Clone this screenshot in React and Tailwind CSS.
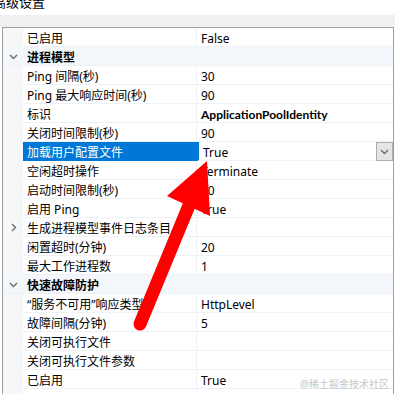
import React from "react";

const rows = [
  { name: "已启用", value: "False" },
  { cat: "进程模型" },
  { name: "Ping 间隔(秒)", value: "30" },
  { name: "Ping 最大响应时间(秒)", value: "90" },
  { name: "标识", value: "ApplicationPoolIdentity", bold: true },
  { name: "关闭时间限制(秒)", value: "90" },
  { name: "加载用户配置文件", value: "True", selected: true },
  { name: "空闲超时操作", value: "Terminate" },
  { name: "启动时间限制(秒)", value: "90" },
  { name: "启用 Ping", value: "True" },
  { name: "生成进程模型事件日志条目", value: "", expand: true },
  { name: "闲置超时(分钟)", value: "20" },
  { name: "最大工作进程数", value: "1" },
  { cat: "快速故障防护" },
  { name: "“服务不可用”响应类型", value: "HttpLevel" },
  { name: "故障间隔(分钟)", value: "5" },
  { name: "关闭可执行文件", value: "" },
  { name: "关闭可执行文件参数", value: "" },
  { name: "已启用", value: "True" },
  { name: "", value: "" },
];

const font = { fontFamily: '"Noto Sans", "Noto Sans CJK SC", sans-serif' };

function Chevron({ dir }) {
  return (
    <svg width="9" height="9" viewBox="0 0 9 9" fill="none" stroke="#6b6b6b" strokeWidth="1.4">
      {dir === "down" ? <path d="M1 3 L4.5 6.5 L8 3" /> : <path d="M3 1 L6.5 4.5 L3 8" />}
    </svg>
  );
}

function Row({ row }) {
  if (row.cat) {
    return (
      <div className="flex h-[19px] bg-[#f3f6fb] border-b border-[#eef1f5]">
        <div className="w-[20px] flex items-center justify-center">
          <Chevron dir="down" />
        </div>
        <div className="pl-[4px] pt-[4px] flex items-center font-bold text-[12px] text-black">{row.cat}</div>
      </div>
    );
  }
  return (
    <div className="flex h-[19px]">
      <div className="w-[20px] shrink-0 flex items-center justify-center bg-[#f6f7f9]">
        {row.expand && <Chevron dir="right" />}
      </div>
      <div
        className={`w-[174px] shrink-0 flex items-center pl-[4px] pt-[4px] text-[12px] whitespace-nowrap border-b border-r ${
          row.selected ? "bg-[#0078d7] text-white border-[#0078d7]" : "text-black border-[#eef1f5]"
        }`}
      >
        {row.name}
      </div>
      <div
        className={`flex-1 flex items-center justify-between pl-[4px] text-[12px] text-black border-b border-[#eef1f5] ${
          row.selected ? "border-l-2 border-l-[#0078d7] pl-[2px]" : ""
        }`}
      >
        <span
          className={`pt-[4px] ${row.bold ? "font-bold" : ""}`}
          style={row.bold ? { fontFamily: "Lato, sans-serif" } : undefined}
        >
          {row.value}
        </span>
        {row.selected && (
          <div className="w-[17px] h-[19px] bg-[#e5e5e5] border border-[#adadad] flex items-center justify-center">
            <Chevron dir="down" />
          </div>
        )}
      </div>
    </div>
  );
}

export default function App() {
  return (
    <div className="relative w-[395px] h-[394px] overflow-hidden bg-white" style={font}>
      <div className="h-[15px] flex justify-between overflow-hidden">
        <span className="ml-[-7px] mt-[-4px] text-[13px] leading-[13px] text-black">高级设置</span>
        <span className="mr-[38px] mt-[-11px] text-[12px] leading-[14px] text-black">?</span>
      </div>
      <div className="h-[12px] bg-[#f0f0f0]" />
      <div className="ml-[2px] w-[392px] border-t border-l border-r border-[#a0a0a0]">
        {rows.map((r, i) => (
          <Row key={i} row={r} />
        ))}
      </div>
      <div className="absolute right-[6px] bottom-[2px] text-[10px] text-[#c8c8c8]">@稀土掘金技术社区</div>
      <svg className="absolute left-0 top-0" width="395" height="394" viewBox="0 0 395 394">
        <line x1="140" y1="324" x2="190" y2="203" stroke="#ff0000" strokeWidth="13" strokeLinecap="round" />
        <polygon points="207,161 167,196 210,216" fill="#ff0000" />
      </svg>
    </div>
  );
}
